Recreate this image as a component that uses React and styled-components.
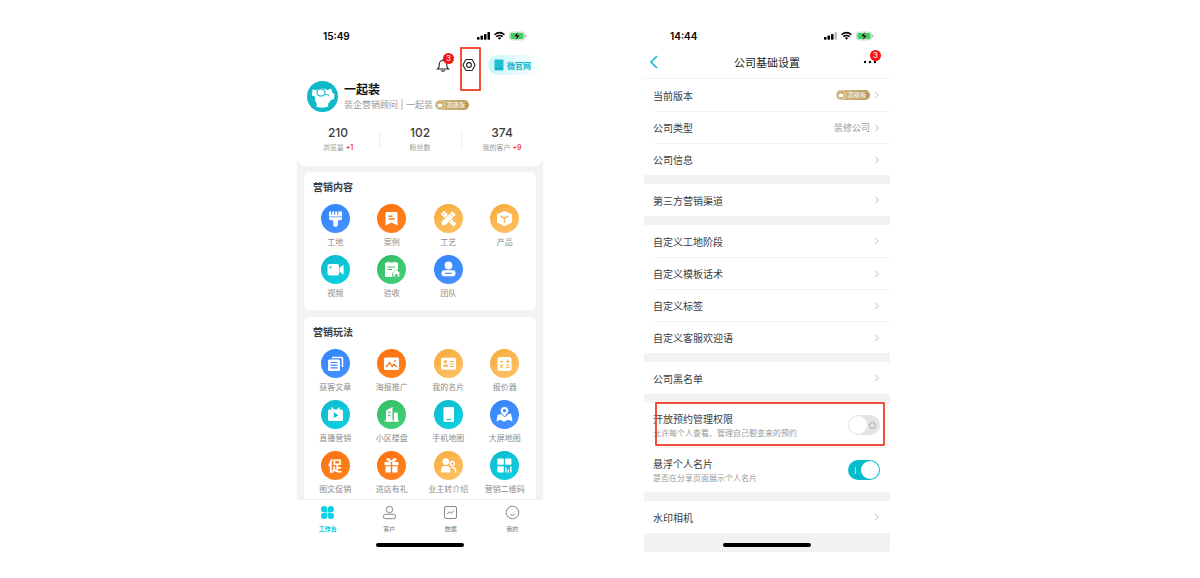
import React, { useState } from "react";
import styled, { createGlobalStyle } from "styled-components";

const GlobalStyle = createGlobalStyle`
  * {
    box-sizing: border-box;
  }
  body {
    margin: 0;
    background: #fff;
    color: #3c3c3c;
    font-family: Inter, "Noto Sans CJK SC", sans-serif;
  }
  button {
    margin: 0;
    padding: 0;
    border: 0;
    background: none;
    color: inherit;
    font: inherit;
    cursor: pointer;
  }
  a {
    color: inherit;
    text-decoration: none;
  }
  svg {
    display: block;
    flex: none;
  }
  h1, h2, p {
    margin: 0;
  }
`;

const TEAL = "linear-gradient(150deg, #10b9cc, #0bd2e4)";
const BLUE = "linear-gradient(150deg, #3385fb, #4792ff)";
const ORANGE = "linear-gradient(150deg, #fb7010, #ff8420)";
const YELLOW = "linear-gradient(150deg, #f6ab3c, #ffc367)";
const GREEN = "linear-gradient(150deg, #34bc66, #44d17a)";

const contents = [
  { label: "工地", icon: "brush", color: BLUE },
  { label: "案例", icon: "bookmark", color: ORANGE },
  { label: "工艺", icon: "tools", color: YELLOW },
  { label: "产品", icon: "box", color: YELLOW },
  { label: "视频", icon: "video", color: TEAL },
  { label: "验收", icon: "check", color: GREEN },
  { label: "团队", icon: "team", color: BLUE },
];

const plays = [
  { label: "获客文章", icon: "article", color: BLUE },
  { label: "海报推广", icon: "poster", color: ORANGE },
  { label: "我的名片", icon: "card", color: YELLOW },
  { label: "报价器", icon: "calc", color: YELLOW },
  { label: "直播营销", icon: "live", color: TEAL },
  { label: "小区楼盘", icon: "building", color: GREEN },
  { label: "手机地图", icon: "phone", color: TEAL },
  { label: "大屏地图", icon: "map", color: BLUE },
  { label: "图文促销", text: "促", color: ORANGE },
  { label: "进店有礼", icon: "gift", color: ORANGE },
  { label: "业主转介绍", icon: "refer", color: YELLOW },
  { label: "营销二维码", icon: "qr", color: TEAL },
];

const glyphs = {
  brush: (
    <>
      <path d="M8 7.500h2.200v3.200h1V7.500h2v3.200h1V7.500h2v3.200h1V7.500h3.800v5H8z" />
      <path d="M8 13.300h13v1.200q0 1.800-1.800 1.800H17v4.200a2.400 2.400 0 0 1-4.800 0v-4.200H9.800Q8 16.300 8 14.500z" />
    </>
  ),
  bookmark: (
    <>
      <path d="M8.500 9.500q0-1.500 1.500-1.500h9q1.500 0 1.500 1.500v12l-6-3-6 3z" />
      <path d="M11.500 12.200h4M11.500 15h6" stroke="#ff7c1a" strokeWidth="1.400" />
    </>
  ),
  tools: (
    <>
      <path d="m6.800 10 3.200-3.200 4.500 4.500-3.200 3.200zM17.300 14.800l5 4.800-2.800 2.800-5-5z" />
      <path d="M18.300 7 22.300 11 11.500 21.500 7 22 7.500 17.500z" stroke="#f9b44c" strokeWidth=".8" />
      <path d="m16 9.500 3.800 3.800M8.800 9l1.700 1.700M18.500 18.500l1.700-1.700" stroke="#f9b44c" strokeWidth="1" />
    </>
  ),
  box: (
    <>
      <path d="M14.500 7 22 10.300v8.200l-7.500 3.700L7 18.500v-8.200z" />
      <path d="m10.500 12.200 4 2 4-2M14.500 14.200v4.500" fill="none" stroke="#f9b44c" strokeWidth="1.300" />
    </>
  ),
  video: (
    <>
      <rect x="6.500" y="9" width="11.500" height="11.500" rx="2" />
      <path d="m18.600 12.500 4-2.500v9.500l-4-2.500z" />
      <circle cx="9.500" cy="12.200" r="1" fill="#10c0d2" />
    </>
  ),
  check: (
    <>
      <path d="M8 8.500q0-1 1-1h1.800V6.700h1.500v.8h4.400V6.700h1.500v.8H20q1 0 1 1v6.300l-5.600 4V22H9q-1 0-1-1z" />
      <path d="M10.300 12h7.700M10.300 14.500H15" stroke="#39c46d" strokeWidth="1.100" />
      <path d="m19.300 14.500 4.200 3.800h-1V22h-2.100v-2.400h-2.200V22h-2.100v-3.700h-1z" stroke="#39c46d" strokeWidth=".5" />
    </>
  ),
  team: (
    <>
      <circle cx="14.500" cy="10.500" r="3.900" />
      <path d="M10 15.300h9q2.500 0 2.500 3t-2.500 3h-9q-2.500 0-2.500-3t2.500-3z" />
      <path d="M11.200 18.300h6.600" stroke="#3d8bfd" strokeWidth="1.200" />
    </>
  ),
  article: (
    <>
      <path d="M11 8.500h9.500q1 0 1 1V18" fill="none" stroke="#fff" strokeWidth="1.500" />
      <rect x="7" y="10.500" width="12" height="11.500" rx="1.500" />
      <path d="M9.500 13.500h7M9.500 16.200h7M9.500 18.900h7" stroke="#3586fb" strokeWidth="1.200" />
    </>
  ),
  poster: (
    <>
      <rect x="7" y="8.500" width="15" height="12.500" rx="1.500" />
      <path d="m9 18 3.700-4.500 2.500 4 1.600-2.300 3 2.800" fill="none" stroke="#fd7617" strokeWidth="1.300" />
      <circle cx="18" cy="12" r=".9" fill="#fd7617" />
    </>
  ),
  card: (
    <>
      <rect x="7" y="8.800" width="15" height="12" rx="1.500" />
      <circle cx="11.500" cy="12.700" r="1.600" fill="#f8b249" />
      <path d="M8.800 17.800q0-2.300 2.700-2.600 2.700.3 2.700 2.600z" fill="#f8b249" />
      <path d="M15.500 12.500H20M15.500 15H20M15.500 17.500H20" stroke="#f8b249" strokeWidth="1" />
    </>
  ),
  calc: (
    <>
      <rect x="7.500" y="8" width="14" height="14" rx="2" />
      <path d="M9.800 12.500h3.200M16 12.500h3.600M17.800 10.700v3.600M10.200 16l2.600 2.600M12.800 16l-2.600 2.600M16 16.300h3.600M16 18.500h3.600" stroke="#f8b249" strokeWidth="1.100" />
    </>
  ),
  live: (
    <>
      <path d="m10.500 7.500 2 2.500M18.500 7.500l-2 2.500" stroke="#fff" strokeWidth="1.400" />
      <rect x="7" y="9.500" width="15" height="11.500" rx="1.500" />
      <path d="M12.800 12.300v5.800l4.700-2.900z" fill="#10bfd1" />
    </>
  ),
  building: (
    <>
      <path d="M9 10.500 15.500 7v14.500H9zM17 12.500h2.300q1.500 0 1.500 1.500v7.500H17z" />
      <path d="m11 12.800 2.500-1M11 15.800l2.500-1" stroke="#39c46d" strokeWidth="1.200" />
      <path d="M7.500 21H22" stroke="#fff" strokeWidth="1.100" />
    </>
  ),
  phone: (
    <>
      <rect x="9.500" y="7" width="10.500" height="15" rx="1.500" />
      <path d="M12.500 19.500h4.500" stroke="#10bfd1" strokeWidth="1.200" />
    </>
  ),
  map: (
    <>
      <path d="M7.500 15 11 14l4 3.300 3.500-3.300 2.500-.5 1.500 7.800-4.500-1.500-4 2-3.800-2L6.500 21.500z" />
      <path d="M14.500 6.700c4.500 0 5 4.200 2.700 7l-2.700 3.200-2.700-3.200c-2.300-2.800-1.800-7 2.700-7z" stroke="#3d8bfd" strokeWidth=".7" />
      <circle cx="14.500" cy="10.700" r="1.600" fill="#3d8bfd" />
    </>
  ),
  gift: (
    <>
      <path d="M7.500 11h6.300v3.200H7.500zM15.200 11h6.300v3.200h-6.300zM8.500 15.300h5.300v6.200H8.500zM15.200 15.300h5.300v6.200h-5.300z" />
      <path d="M14.500 11C12 11 9 9.800 9.500 8s4-.7 5 2c1-2.700 4.500-3.800 5-2s-2.500 3-5 3z" />
    </>
  ),
  refer: (
    <>
      <circle cx="11.800" cy="10.600" r="3.400" />
      <path d="M7 21.500v-2.300q0-4.200 3.800-4.200h2q3.700 0 3.700 4.200v2.300z" />
      <circle cx="18.300" cy="12.500" r="2" fill="none" stroke="#fff" strokeWidth="1.300" />
      <path d="M17.300 16.500h1.400q2.800 0 2.800 2.500v2.500" fill="none" stroke="#fff" strokeWidth="1.500" />
    </>
  ),
  qr: (
    <>
      <rect x="7.300" y="7.500" width="6.500" height="6.300" rx="1" />
      <rect x="15" y="7.500" width="6.500" height="6.300" rx="1" />
      <rect x="7.300" y="15.200" width="6.500" height="6.300" rx="1" />
      <path d="M15.800 16.500v5M18.300 18.500v3M20.800 15.500v6" stroke="#fff" strokeWidth="1.400" />
    </>
  ),
};

const tabs = [
  {
    label: "工作台",
    icon: (
      <path
        d="M7.200 4.300a3.100 3.100 0 1 0-3.100 2.900h3.100zM7.800 4.300a3.100 3.100 0 1 1 3.100 2.900H7.800zM7.200 10.700a3.100 3.100 0 1 1-3.100-2.900h3.100zM7.800 10.700a3.100 3.100 0 1 0 3.100-2.900H7.800z"
        fill="#08d3e2"
      />
    ),
  },
  {
    label: "客户",
    icon: (
      <g fill="none" stroke="#888" strokeWidth="1">
        <circle cx="7.500" cy="4.500" r="3.200" />
        <rect x="1.300" y="9.300" width="12.400" height="4.400" rx="2.200" />
      </g>
    ),
  },
  {
    label: "数据",
    icon: (
      <g fill="none" stroke="#888" strokeWidth="1">
        <rect x="1.500" y="1.500" width="12" height="12" rx="1.500" />
        <path d="m4.200 9.200 2-2.500 2 1.800 2.600-3" />
      </g>
    ),
  },
  {
    label: "我的",
    icon: (
      <g fill="none" stroke="#888" strokeWidth="1">
        <circle cx="7.500" cy="7.500" r="6.300" />
        <path d="M5.300 9.500q2.200 1.800 4.400 0" />
      </g>
    ),
  },
];

const settingGroups = [
  [
    { label: "当前版本", vip: true },
    { label: "公司类型", value: "装修公司" },
    { label: "公司信息" },
  ],
  [{ label: "第三方营销渠道" }],
  [
    { label: "自定义工地阶段" },
    { label: "自定义模板话术" },
    { label: "自定义标签" },
    { label: "自定义客服欢迎语" },
  ],
  [{ label: "公司黑名单" }],
];

const StatusBar = ({ time, weak }) => (
  <Status>
    <span>{time}</span>
    <svg viewBox="0 0 50 10" width="50" height="10">
      <rect x="0" y="6" width="2.500" height="2.700" rx=".6" />
      <rect x="3.500" y="4.600" width="2.500" height="4.100" rx=".6" />
      <rect x="7" y="2.900" width="2.500" height="5.800" rx=".6" />
      <rect x="10.500" y="1" width="2.500" height="7.700" rx=".6" opacity={weak ? 0.25 : 1} />
      <path d="M17.500 3.700q5-4.200 10 0M19.300 5.700q3.200-2.600 6.400 0" fill="none" stroke="#000" strokeWidth="1.500" />
      <path d="M20.800 7q1.700-1.300 3.400 0l-1.700 1.700z" />
      <rect x="32.500" y="1" width="15" height="8" rx="2.300" fill="#dff6e4" stroke="#b9c5bb" strokeWidth=".6" />
      <rect x="33.500" y="2" width="13" height="6" rx="1.400" fill="#3bd15d" />
      <path d="M48.700 3.700v2.600" stroke="#9aa59c" />
      <path d="M41.300.7 36.800 5.500h2.800l-1 3.800 4.600-5h-2.900z" stroke="#fff" strokeWidth=".3" />
    </svg>
  </Status>
);

const VipTag = () => (
  <Vip>
    <svg viewBox="0 0 10 10" width="10" height="10">
      <circle cx="5" cy="5" r="4.500" fill="#c5a96d" stroke="#e8d7ae" strokeWidth="1" />
      <path d="m2.300 3.600 1.500 1L5 2.800l1.200 1.800 1.500-1L7 7.200H3z" fill="#fff" />
    </svg>
    高级版
  </Vip>
);

const Chevron = () => (
  <svg viewBox="0 0 6 8" width="6" height="8">
    <path d="m1 1 3.500 3L1 7" fill="none" stroke="#c4c4c4" strokeWidth="1" />
  </svg>
);

const AppCard = ({ title, items, flush }) => (
  <Card $flush={flush}>
    <CardTitle>{title}</CardTitle>
    <AppGrid>
      {items.map((item) => (
        <AppButton key={item.label}>
          <AppIcon $color={item.color}>
            {item.text || (
              <svg viewBox="0 0 29 29" width="29" height="29" fill="#fff">
                {glyphs[item.icon]}
              </svg>
            )}
          </AppIcon>
          {item.label}
        </AppButton>
      ))}
    </AppGrid>
  </Card>
);

const Workbench = () => (
  <Phone>
    <Header>
      <StatusBar time="15:49" />
      <Toolbar>
        <IconButton aria-label="消息">
          <svg viewBox="0 0 14 14" width="14" height="14" fill="none" stroke="#222" strokeWidth="1.100">
            <path d="M1.500 11q1.700-1.300 1.700-3V6.300a3.800 3.800 0 0 1 7.600 0V8q0 1.700 1.700 3zM7 1.200v1.300M5.300 12.500q1.700 1.300 3.400 0" />
          </svg>
          <Count>3</Count>
        </IconButton>
        <IconButton aria-label="设置">
          <svg viewBox="0 0 14 14" width="14" height="14" fill="none" stroke="#222" strokeWidth="1.100">
            <path d="M4.500 1.500h5q.6 0 .9.500l2.400 4.500q.2.500 0 1L10.400 12q-.3.500-.9.500h-5q-.6 0-.9-.5L1.200 7.500q-.2-.5 0-1L3.600 2q.3-.5.9-.5z" />
            <circle cx="7" cy="7" r="2.400" />
          </svg>
          <GearMark />
        </IconButton>
        <SiteLink href="#site">
          <svg viewBox="0 0 10 12" width="10" height="12">
            <rect x=".5" y=".5" width="9" height="11" rx="1" fill="#1cc0d0" />
            <path d="M1 9.500h8" stroke="#0aa5b8" strokeWidth="1" />
          </svg>
          微官网
        </SiteLink>
      </Toolbar>
      <Profile>
        <svg viewBox="0 0 31 31" width="31" height="31">
          <circle cx="15.500" cy="15.500" r="15.500" fill="#0fb9ca" />
          <path
            d="M5.500 8.500 9 9q5-2.500 9.500-1l2.500 1.300q1.500-2 3.500-1.300l.5 3.500 2.500 1.500-.5 5q-1.200 1-3 .8-1 2.800-3 4l.3 2.700q-4 1.500-8.500 1-2.300-.3-3.300-.8l.3-3.200Q7.500 20 7.800 15.500L5 14.500z"
            fill="#fff"
          />
          <ellipse cx="14" cy="11.500" rx="4" ry="3.500" fill="#fff" stroke="#0fb9ca" strokeWidth="1.200" />
          <path d="M18.500 13.500q2.500-.5 4 1.500" fill="none" stroke="#0fb9ca" />
        </svg>
        <div>
          <Name>一起装</Name>
          <Role>
            装企营销顾问 | 一起装
            <VipTag />
          </Role>
        </div>
      </Profile>
      <Stats>
        <Stat>
          <strong>210</strong>
          <p>浏览量 <em>+1</em></p>
        </Stat>
        <Stat>
          <strong>102</strong>
          <p>粉丝数</p>
        </Stat>
        <Stat>
          <strong>374</strong>
          <p>我的客户 <em>+9</em></p>
        </Stat>
      </Stats>
    </Header>
    <Cards>
      <AppCard title="营销内容" items={contents} />
      <AppCard title="营销玩法" items={plays} flush />
    </Cards>
    <TabBar>
      {tabs.map((tab, i) => (
        <Tab key={tab.label} href={`#tab-${i}`} $active={i === 0}>
          <svg viewBox="0 0 15 15" width="15" height="15">
            {tab.icon}
          </svg>
          {tab.label}
        </Tab>
      ))}
    </TabBar>
    <HomeArea>
      <HomeBar />
    </HomeArea>
  </Phone>
);

const Settings = () => {
  const [booking, setBooking] = useState(false);
  const [floating, setFloating] = useState(true);

  return (
    <Phone>
      <StatusBar time="14:44" weak />
      <NavBar>
        <IconButton aria-label="返回">
          <svg viewBox="0 0 9 14" width="9" height="14">
            <path d="M8 1 2 7l6 6" fill="none" stroke="#14b8cc" strokeWidth="1.600" />
          </svg>
        </IconButton>
        <NavTitle>公司基础设置</NavTitle>
        <IconButton aria-label="更多">
          <svg viewBox="0 0 14 14" width="14" height="14">
            <circle cx="2" cy="7" r="1.200" />
            <circle cx="7" cy="7" r="1.200" />
            <circle cx="12" cy="7" r="1.200" />
          </svg>
          <Count>3</Count>
        </IconButton>
      </NavBar>
      <Groups>
        {settingGroups.map((rows) => (
          <Group key={rows[0].label}>
            {rows.map((row) => (
              <Row key={row.label} href={`#${row.label}`}>
                {row.label}
                <RowValue>
                  {row.vip && <VipTag />}
                  {row.value}
                  <Chevron />
                </RowValue>
              </Row>
            ))}
          </Group>
        ))}
        <Group>
          <SwitchRow>
            <span>
              开放预约管理权限
              <Hint>允许每个人查看、管理自己裂变来的预约</Hint>
            </span>
            <Switch
              type="checkbox"
              checked={booking}
              onChange={(e) => setBooking(e.target.checked)}
            />
            <RowMark />
          </SwitchRow>
          <SwitchRow>
            <span>
              悬浮个人名片
              <Hint>是否在分享页面展示个人名片</Hint>
            </span>
            <Switch
              type="checkbox"
              checked={floating}
              onChange={(e) => setFloating(e.target.checked)}
            />
          </SwitchRow>
        </Group>
        <Group>
          <Row href="#watermark">
            水印相机
            <RowValue>
              <Chevron />
            </RowValue>
          </Row>
        </Group>
      </Groups>
      <HomeArea $grey>
        <HomeBar />
      </HomeArea>
    </Phone>
  );
};

const App = () => (
  <Stage>
    <GlobalStyle />
    <Workbench />
    <Settings />
  </Stage>
);

export default App;

const Stage = styled.main`
  display: flex;
  justify-content: center;
  align-items: flex-start;
  gap: 101px;
  padding: 26px 13px 26px 0;
`;

const Phone = styled.section`
  flex: 0 1 246px;
  min-width: 220px;
`;

const Status = styled.div`
  display: flex;
  align-items: center;
  justify-content: space-between;
  height: 20px;
  padding: 0 16px 0 26px;
  color: #000;
  font-size: 10px;
  font-weight: 600;
`;

const Header = styled.header`
  position: relative;
  padding-bottom: 13px;
  border-radius: 0 0 8px 8px;
  background: #fff;
`;

const Toolbar = styled.div`
  display: flex;
  align-items: center;
  justify-content: flex-end;
  gap: 12px;
  height: 22px;
  margin-top: 8px;
`;

const IconButton = styled.button`
  position: relative;
  display: flex;
`;

const Count = styled.span`
  position: absolute;
  top: -5px;
  left: 7px;
  width: 11px;
  height: 11px;
  border-radius: 50%;
  background: #f81414;
  color: #fff;
  font-size: 8px;
  line-height: 11px;
  text-align: center;
`;

const GearMark = styled.i`
  position: absolute;
  inset: -11px -5px -19px -2px;
  border: 2px solid #ec5038;
  border-radius: 1px;
`;

const SiteLink = styled.a`
  display: flex;
  align-items: center;
  gap: 3px;
  height: 20px;
  padding: 0 12px 0 6px;
  border-radius: 10px 0 0 10px;
  background: linear-gradient(90deg, #c9f5fa, #fff);
  color: #12b3c5;
  font-size: 8px;
  font-weight: 700;
`;

const Profile = styled.div`
  display: flex;
  align-items: center;
  gap: 6px;
  margin-top: 5px;
  padding: 0 10px;
`;

const Name = styled.h1`
  color: #111;
  font-size: 12px;
  font-weight: 700;
  line-height: 16px;
`;

const Role = styled.div`
  display: flex;
  align-items: center;
  gap: 2px;
  color: #999;
  font-size: 9px;
  line-height: 14px;
  white-space: nowrap;
`;

const Vip = styled.span`
  display: flex;
  align-items: center;
  gap: 2px;
  height: 10px;
  padding-right: 4px;
  border-radius: 5px;
  background: linear-gradient(90deg, #d6c08c, #b99a5b);
  color: #fff;
  font-size: 6px;
  line-height: 10px;
`;

const Stats = styled.div`
  display: grid;
  grid-template-columns: repeat(3, 1fr);
  margin-top: 14px;
`;

const Stat = styled.div`
  text-align: center;

  & + & {
    background: linear-gradient(#eee, #eee) 0 6px / 1px 16px no-repeat;
  }
  strong {
    display: block;
    font-size: 12px;
    font-weight: 500;
    line-height: 14px;
  }
  p {
    margin-top: 3px;
    color: #999;
    font-size: 7px;
    line-height: 10px;
  }
  em {
    color: #ee3b3b;
    font-style: normal;
    font-weight: 600;
  }
`;

const Cards = styled.div`
  display: flex;
  flex-direction: column;
  gap: 7px;
  margin-top: -8px;
  padding: 14px 7px 0;
  background: #f2f2f2;
`;

const Card = styled.section`
  padding: 8px 3px ${({ $flush }) => ($flush ? "5px" : "12px")};
  border-radius: ${({ $flush }) => ($flush ? "6px 6px 0 0" : "6px")};
  background: #fff;
`;

const CardTitle = styled.h2`
  padding-left: 6px;
  font-size: 10px;
  font-weight: 700;
  line-height: 14px;
`;

const AppGrid = styled.div`
  display: grid;
  grid-template-columns: repeat(4, 1fr);
  gap: 8px 0;
  margin-top: 10px;
`;

const AppButton = styled.button`
  display: flex;
  flex-direction: column;
  align-items: center;
  gap: 4px;
  color: #8c8c8c;
  font-size: 8px;
  line-height: 10px;
  white-space: nowrap;
`;

const AppIcon = styled.span`
  display: flex;
  align-items: center;
  justify-content: center;
  width: 29px;
  height: 29px;
  border-radius: 50%;
  background: ${({ $color }) => $color};
  color: #fff;
  font-size: 14px;
  font-weight: 700;
  line-height: 29px;
`;

const TabBar = styled.nav`
  display: grid;
  grid-template-columns: repeat(4, 1fr);
  padding-top: 5px;
  border-top: 1px solid #efefef;
`;

const Tab = styled.a`
  display: flex;
  flex-direction: column;
  align-items: center;
  gap: 5px;
  color: ${({ $active }) => ($active ? "#08c5d5" : "#777")};
  font-size: 6px;
  font-weight: ${({ $active }) => ($active ? 700 : 400)};
  line-height: 8px;
`;

const HomeArea = styled.div`
  display: flex;
  justify-content: center;
  padding: 10px 0 5px;
  border-radius: 0 0 3px 3px;
  background: ${({ $grey }) => ($grey ? "#f2f2f2" : "#fff")};
`;

const HomeBar = styled.i`
  width: 88px;
  height: 4px;
  border-radius: 2px;
  background: #000;
`;

const NavBar = styled.div`
  display: grid;
  grid-template-columns: 1fr auto 1fr;
  align-items: center;
  height: 33px;
  padding: 0 13px 0 5px;
  border-bottom: 1px solid #f2f2f2;

  ${IconButton}:last-child {
    justify-self: end;
  }
`;

const NavTitle = styled.h1`
  padding-left: 8px;
  color: #222;
  font-size: 11px;
  font-weight: 400;
`;

const Groups = styled.div`
  display: flex;
  flex-direction: column;
  gap: 9px;
  background: #f2f2f2;
`;

const Group = styled.div`
  padding-left: 9px;
  background: #fff;
`;

const Row = styled.a`
  display: flex;
  align-items: center;
  justify-content: space-between;
  height: 32px;
  padding-right: 10px;
  font-size: 10px;

  & + & {
    border-top: 1px solid #f3f3f3;
  }
`;

const RowValue = styled.span`
  display: flex;
  align-items: center;
  gap: 4px;
  color: #999;
  font-size: 9px;
`;

const SwitchRow = styled.label`
  position: relative;
  display: flex;
  align-items: center;
  justify-content: space-between;
  height: 44px;
  padding-right: 10px;
  font-size: 10px;
  line-height: 15px;
  cursor: pointer;

  & + & {
    height: 45px;
    border-top: 1px solid #f3f3f3;
  }
`;

const Hint = styled.small`
  display: block;
  color: #999;
  font-size: 8px;
  line-height: 12px;
`;

const Switch = styled.input`
  appearance: none;
  display: flex;
  align-items: center;
  justify-content: space-between;
  width: 32px;
  height: 20px;
  margin: 0;
  padding: 0 4px 0 1px;
  border-radius: 10px;
  background: #e3e3e3;
  cursor: pointer;

  &::before {
    content: "";
    width: 18px;
    height: 18px;
    border-radius: 50%;
    background: #fff;
  }
  &::after {
    content: "";
    box-sizing: border-box;
    width: 7px;
    height: 7px;
    border: 1px solid #aaa;
    border-radius: 50%;
  }
  &:checked {
    flex-direction: row-reverse;
    padding: 0 1px 0 7px;
    background: #06bccb;
  }
  &:checked::after {
    width: 1px;
    border: 0;
    border-radius: 0;
    background: #a5e8ee;
  }
`;

const RowMark = styled.i`
  position: absolute;
  inset: -1px 5px 1px 2px;
  border: 2px solid #ec5038;
  border-radius: 1px;
`;
